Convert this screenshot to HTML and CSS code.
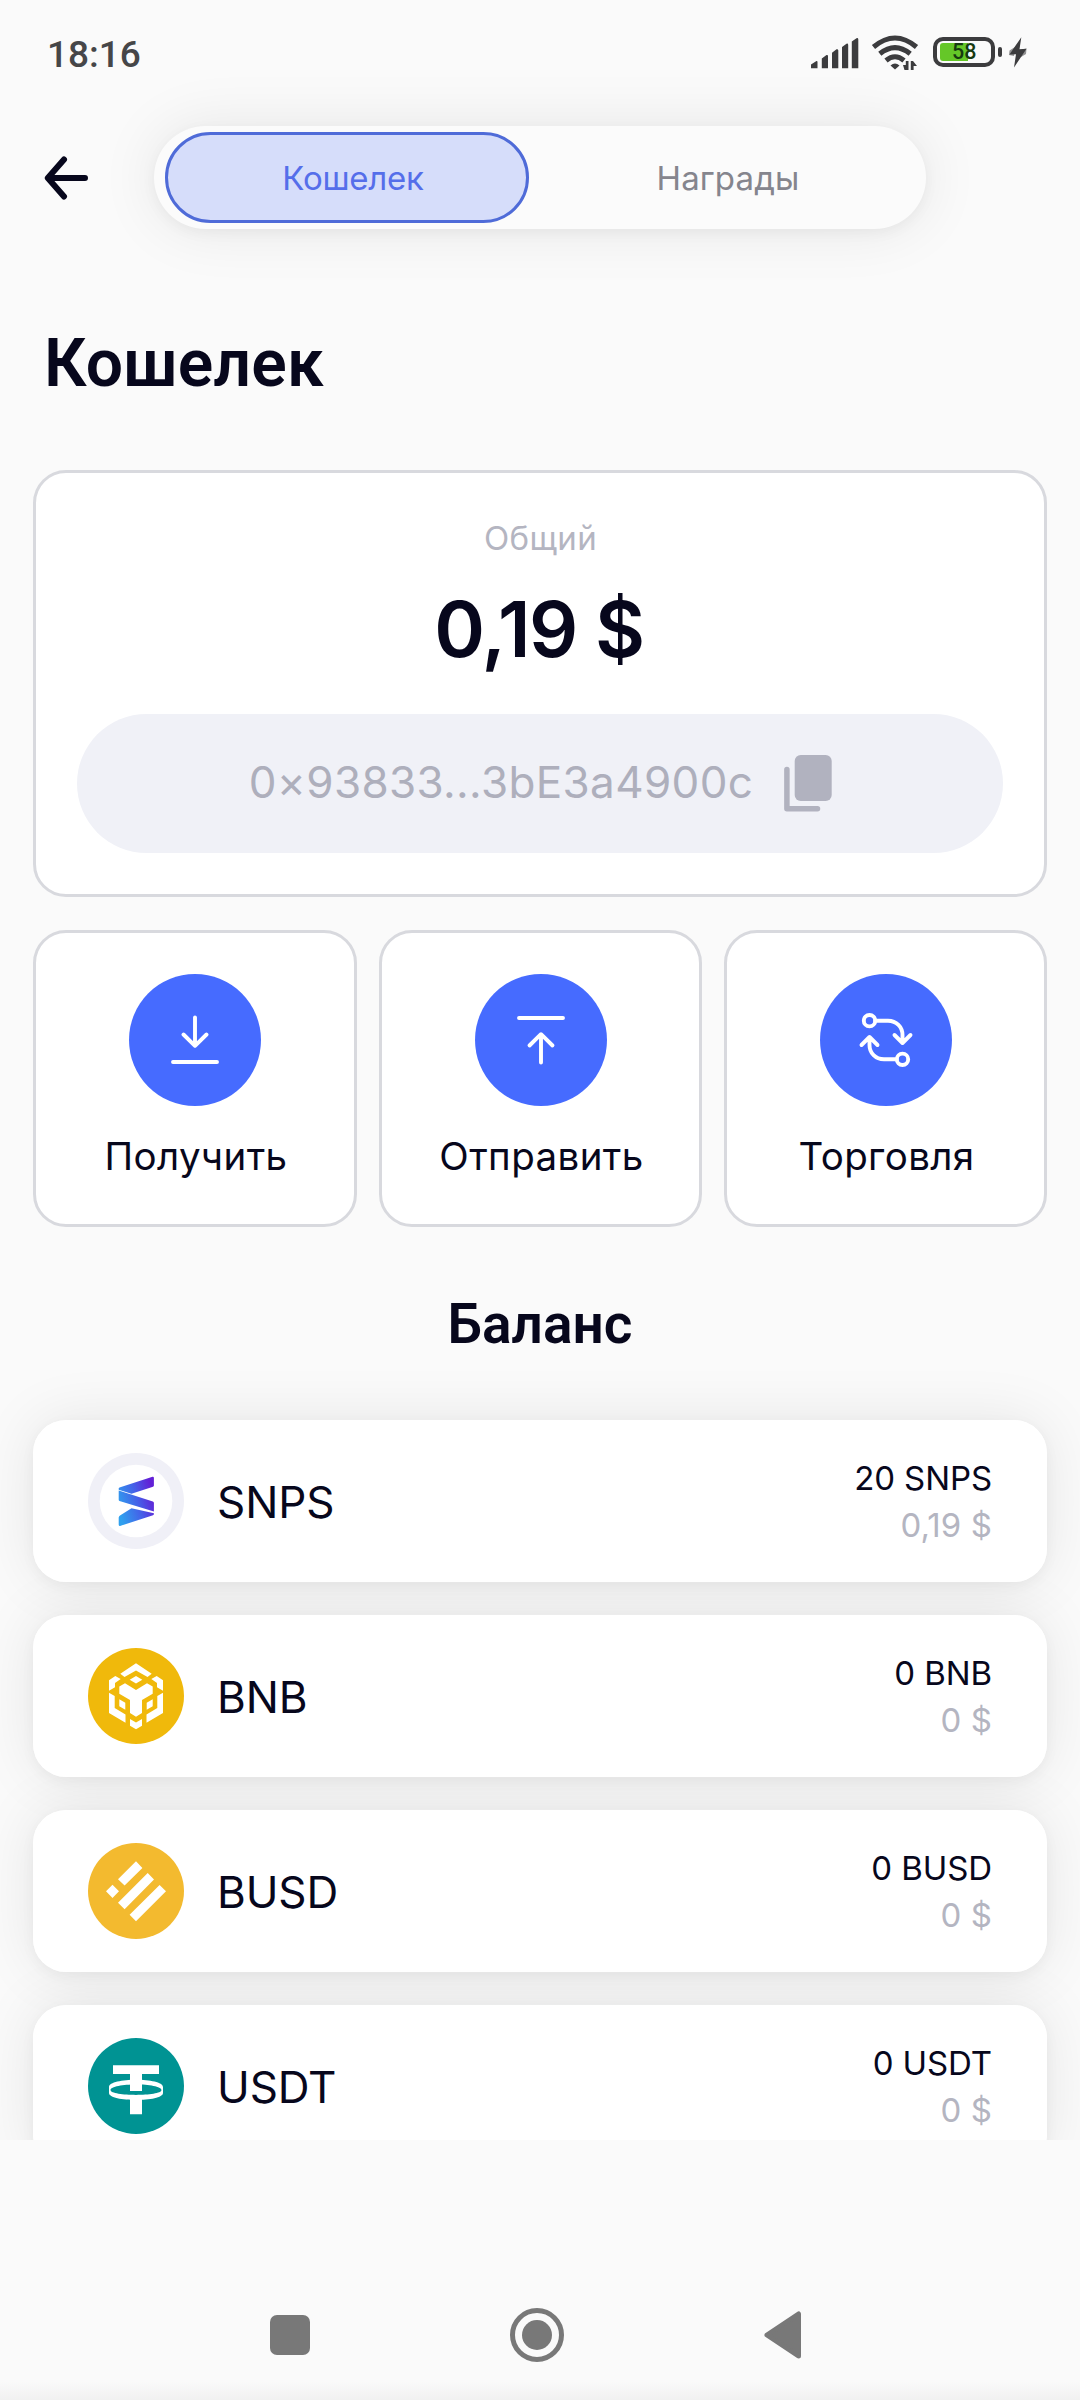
FILE: index.html
```html
<!DOCTYPE html>
<html lang="ru">
<head>
<meta charset="utf-8">
<title>Кошелек</title>
<link rel="stylesheet" href="styles.css">
</head>
<body>
<div class="screen">
  <div class="status">
    <span class="status-time">18:16</span>
    <div class="status-icons">
      <svg class="ico-signal" width="49" height="32" viewBox="0 0 49 32">
        <path d="M1 31.2V27.5L6.500 24Q7.500 23.800 7.500 25V31.200Z M11.800 31.200V21.500L16.500 18Q18 17.600 18 19V31.200Z M22 31.200V15.700L26.500 12.300Q28.300 12 28.300 13.500V31.200Z M32 31.200V10L36.500 6.700Q38.200 6.300 38.200 8V31.200Z M41.800 31.200V4.500L46.500 1.200Q48.300 .8 48.300 2.500V31.200Z"/>
      </svg>
      <svg class="ico-wifi" width="48" height="36" viewBox="0 0 48 36">
        <g fill="none" stroke-width="5"><path d="M2.500 12Q24 -6 45.500 12"/><path d="M8.800 18.800Q24 6.500 39.200 18.800"/><path d="M15 25.500Q24 18 33 25.500"/></g>
        <path class="solid" d="M24 34.500L19.500 30.500Q24 26.500 28.500 30.500Z"/>
        <path class="solid" d="M33.500 35L32 30H34.800V26H37.500V35Z M39.800 35V26H42L46 31H42.600V35Z"/>
      </svg>
      <div class="battery"><div class="battery-level"></div><span class="battery-text">58</span></div>
      <div class="battery-tip"></div>
      <svg class="ico-bolt" width="18" height="31" viewBox="0 0 18 31"><path d="M12.300 .3L.5 17.500L7 17.200L5 30.500L17.500 11.800L10.500 12.200Z"/><path d="M.5 13.500L6 10L5 19L0 18Z M17.500 11.500L17 17L12 20L10 13Z" opacity=".55"/></svg>
    </div>
  </div>

  <header class="header">
    <svg class="back" width="46" height="46" viewBox="0 0 46 46"><path d="M41 23H5M20 4.500L3.800 23L20 41.500"/></svg>
    <div class="tabs">
      <div class="tab tab-active">Кошелек</div>
      <div class="tab tab-rewards">Награды</div>
    </div>
  </header>

  <main class="content">
    <h1 class="title">Кошелек</h1>

    <section class="wallet">
      <div class="wallet-label">Общий</div>
      <div class="wallet-total">0,19 $</div>
      <div class="address">
        <span class="address-text">0×93833...3bE3a4900c</span>
        <svg width="48" height="57" viewBox="0 0 48 57"><rect x="10.700" y="0" width="37" height="46" rx="6"/><path d="M2.900 14.500V53.700H33.500"/></svg>
      </div>
    </section>

    <section class="actions">
      <div class="action">
        <svg class="action-icon" width="132" height="132" viewBox="0 0 132 132"><circle cx="66" cy="66" r="66"/><path d="M66 43.500V71M54.500 60.500L66 71.800L77.500 60.500M44 88H88"/></svg>
        <span>Получить</span>
      </div>
      <div class="action">
        <svg class="action-icon" width="132" height="132" viewBox="0 0 132 132"><circle cx="66" cy="66" r="66"/><path d="M66 88.500V61M54.500 71.500L66 60.200L77.500 71.500M44 44H88"/></svg>
        <span>Отправить</span>
      </div>
      <div class="action">
        <svg class="action-icon" width="132" height="132" viewBox="0 0 132 132"><circle cx="66" cy="66" r="66"/><path d="M55.300 46.700H68C76.500 46.700 82.500 53 82.500 61V67M74.500 61L82.500 69L90.500 61M76.700 85.300H64C55.500 85.300 49.500 79 49.500 71V65M41.500 71L49.500 63L57.500 71"/><circle class="node" cx="49.500" cy="46.700" r="5.700"/><circle class="node" cx="82.500" cy="85.300" r="5.700"/></svg>
        <span>Торговля</span>
      </div>
    </section>

    <h2 class="subtitle">Баланс</h2>

    <section class="tokens">
      <div class="token">
        <svg class="token-icon" width="96" height="96" viewBox="0 0 96 96">
          <defs><linearGradient id="snps" gradientUnits="userSpaceOnUse" x1="30" y1="54" x2="66" y2="44"><stop offset="0" stop-color="#2fa0ee"/><stop offset=".55" stop-color="#4560e8"/><stop offset="1" stop-color="#6220d6"/></linearGradient></defs>
          <circle cx="48" cy="48" r="48" fill="#f0f0f7"/><circle cx="48" cy="48" r="36.300" fill="#fff"/>
          <path fill="url(#snps)" d="M30.700 35.500Q30.700 34.800 31.500 34.500L64.500 23.800Q65.900 23.500 65.900 25V32.500Q65.900 33.400 65 33.700L43.500 40.800L30.700 36.700Z M30.700 37.500L64.800 48.600Q65.900 49 65.900 50V58.600L31.500 48Q30.700 47.700 30.700 46.800Z M43.500 55.300L65.900 60.200V61Q65.900 61.800 65 62.200L32 72.900Q30.700 73.200 30.700 71.800V64.500Q30.700 63.500 32 62.500Z"/>
        </svg>
        <span class="token-name">SNPS</span>
        <div class="token-sum"><div>20 SNPS</div><div class="fiat">0,19 $</div></div>
      </div>
      <div class="token">
        <svg class="token-icon" width="96" height="96" viewBox="0 0 96 96">
          <circle cx="48" cy="48" r="48" fill="#f0b90b"/>
          <path fill="#fff" d="M32.300 25.700L48 15.300L63.700 25.700L59.500 28.900L48 22.500L36.500 28.900Z M41.700 31.700L48 28L54.300 31.700L48 35.500Z M21 32.300L27.300 28L32.700 31L27 35V39.300L21 42.700Z M75 32.300L68.700 28L63.300 31L69 35V39.300L75 42.700Z M21 44.700L26.700 48V60L37.500 66.500V74.700L21 65Z M75 44.700L69.300 48V60L58.500 66.500V74.700L75 65Z M31.300 51.300L37.300 54.700V61.700L31.300 58.300Z M64.700 51.300L58.700 54.700V61.700L64.700 58.300Z M31.300 38.500L37 35.300L48 42L59 35.300L64.700 38.500V45.700L54 52V65L48 68.700L42 65V52L31.300 45.700Z M42 71L48 74.500L54 71V77.700L48 81.300L42 77.700Z"/>
        </svg>
        <span class="token-name">BNB</span>
        <div class="token-sum"><div>0 BNB</div><div class="fiat">0 $</div></div>
      </div>
      <div class="token">
        <svg class="token-icon" width="96" height="96" viewBox="0 0 96 96">
          <circle cx="48" cy="48" r="48" fill="#f3ba2f"/>
          <path fill="#fff" d="M48 18.300L54.400 24.900L36.600 42.600L30 36.200Z M24.500 41.700L31 48.300L24.500 55L18 48.300Z M59.700 30L66 36.600L36.600 66.200L30 59.700Z M71.600 42L78 48.300L48 78.300L41.600 71.700Z"/>
        </svg>
        <span class="token-name">BUSD</span>
        <div class="token-sum"><div>0 BUSD</div><div class="fiat">0 $</div></div>
      </div>
      <div class="token">
        <svg class="token-icon" width="96" height="96" viewBox="0 0 96 96">
          <circle cx="48" cy="48" r="48" fill="#009393"/>
          <path fill="#fff" fill-rule="evenodd" d="M21 49C21 39.300 75 39.300 75 49V55C75 64.300 21 64.300 21 55Z M22.500 52C22.500 58.500 73.500 58.500 73.500 52C73.500 44.500 22.500 44.500 22.500 52Z"/>
          <path fill="#fff" d="M25 27.300H71V36H54V53H42V36H25Z M42 60H54V76.300H42Z"/>
        </svg>
        <span class="token-name">USDT</span>
        <div class="token-sum"><div>0 USDT</div><div class="fiat">0 $</div></div>
      </div>
    </section>
  </main>

  <nav class="navbar">
    <div class="nav-recent"></div>
    <div class="nav-home"><div class="nav-home-dot"></div></div>
    <svg class="nav-back" width="38" height="48" viewBox="0 0 38 48"><path d="M3 24L34.500 3V45Z"/></svg>
  </nav>
</div>
</body>
</html>
```
FILE: styles.css
```css
* { box-sizing: border-box; }

body {
  margin: 0;
  background: #fafafa;
  color: #07071c;
  font-family: Inter, "Liberation Sans", sans-serif;
}

.screen {
  width: 1080px;
  height: 2400px;
  display: flex;
  flex-direction: column;
  overflow: hidden;
}

/* system status bar */
.status {
  height: 104px;
  flex: none;
  display: flex;
  align-items: center;
  justify-content: space-between;
  padding: 0 53px 0 47px;
}
.status-time {
  padding-top: 5px;
  font: 500 37px/44px Roboto, sans-serif;
  color: #464648;
}
.status-icons { display: flex; align-items: center; }
.ico-signal { margin: 1px 12px 0 0; fill: #3c3c3e; }
.ico-wifi { margin: 2px 14px 0 0; stroke: #3c3c3e; }
.ico-wifi .solid { fill: #3c3c3e; stroke: none; }
.ico-bolt { margin-left: 7px; fill: #3c3c3e; }
.battery {
  width: 62px;
  height: 30px;
  display: grid;
  align-items: center;
  border: 4px solid #3c3c3e;
  border-radius: 10px;
  padding-left: 3px;
}
.battery-level, .battery-text { grid-area: 1 / 1; }
.battery-level {
  width: 28px;
  height: 18px;
  border-radius: 3px 0 0 3px;
  background: #65c728;
}
.battery-text {
  padding-left: 12px;
  font: 500 21.500px/22px Roboto, sans-serif;
  color: #173a10;
}
.battery-tip {
  width: 4px;
  height: 10px;
  margin-left: 3px;
  border-radius: 2px;
  background: #3c3c3e;
}

/* back arrow and section switch */
.header {
  flex: none;
  display: flex;
  align-items: center;
  padding: 22px 0 0 44px;
}
.back {
  fill: none;
  stroke: #07071c;
  stroke-width: 6;
  stroke-linecap: round;
  stroke-linejoin: round;
}
.tabs {
  width: 772px;
  height: 103px;
  margin-left: 64px;
  padding-left: 11px;
  display: flex;
  align-items: center;
  border-radius: 52px;
  background: #fbfbfb;
  box-shadow: 0 4px 14px rgba(0, 0, 0, .045), 0 0 60px rgba(0, 0, 0, .085);
}
.tab {
  flex: 1;
  text-align: center;
  font-size: 33px;
  line-height: 40px;
  color: #85858d;
}
.tab-rewards { padding-left: 1px; letter-spacing: .15px; }
.tab-active {
  flex: none;
  width: 364px;
  height: 91px;
  padding-left: 12px;
  line-height: 86px;
  letter-spacing: -.25px;
  color: #556eea;
  background: #d6ddfa;
  border: 3px solid #4f6bd8;
  border-radius: 46px;
}

.content {
  height: 1911px;
  flex: none;
  overflow: hidden;
  padding: 95px 33px 0;
}
.title {
  margin: 0 0 66px;
  padding-left: 11px;
  font: 600 66px/80px Roboto, sans-serif;
  letter-spacing: .15px;
}

.wallet {
  height: 427px;
  padding: 45px 41px 0;
  background: #fff;
  border: 3px solid #d8d9de;
  border-radius: 33px;
  text-align: center;
}
.wallet-label {
  padding-left: 1px;
  font-size: 33px;
  line-height: 41px;
  letter-spacing: .3px;
  color: #b4b5c1;
}
.wallet-total {
  margin: 23px 0 38px;
  padding-right: 2px;
  font-size: 77px;
  line-height: 94px;
  font-weight: 600;
  letter-spacing: -1.400px;
}
.address {
  height: 139px;
  display: flex;
  align-items: center;
  justify-content: center;
  gap: 31px;
  border-radius: 70px;
  background: #f0f1f7;
}
.address-text {
  padding: 0 0 3px 1px;
  font-size: 44px;
  letter-spacing: .35px;
  color: #aeafbc;
}
.address svg { fill: #b1b2bf; }
.address path {
  fill: none;
  stroke: #b1b2bf;
  stroke-width: 5.500;
  stroke-linecap: round;
  stroke-linejoin: round;
}

.actions {
  margin-top: 33px;
  display: grid;
  grid-template-columns: 324px 323px 323px;
  gap: 22px;
}
.action {
  height: 297px;
  padding-top: 41px;
  display: flex;
  flex-direction: column;
  align-items: center;
  gap: 25px;
  background: #fff;
  border: 3px solid #d8d9de;
  border-radius: 33px;
  font-size: 38.500px;
  line-height: 50px;
  letter-spacing: .4px;
}
.action span { padding-left: 2px; }
.action-icon { fill: #466bff; }
.action-icon path, .action-icon .node {
  fill: none;
  stroke: #fff;
  stroke-width: 3.900;
  stroke-linecap: round;
  stroke-linejoin: round;
}

.subtitle {
  margin: 65px 0 64px;
  text-align: center;
  font: 600 55px/64px Roboto, sans-serif;
}

.tokens {
  display: flex;
  flex-direction: column;
  gap: 33px;
  isolation: isolate;
}
.token {
  position: relative;
  height: 162px;
  flex: none;
  display: flex;
  align-items: center;
  padding: 0 55px;
  border-radius: 33px;
  background: #fff;
}
/* shadows sit below every card so neighbours stay white */
.token::before {
  content: "";
  position: absolute;
  inset: 0;
  z-index: -1;
  border-radius: 33px;
  box-shadow: 0 4px 14px rgba(0, 0, 0, .045), 0 0 60px rgba(0, 0, 0, .085);
}
.token-name {
  flex: 1;
  padding: 1px 0 0 33px;
  font-size: 44px;
  letter-spacing: -.1px;
}
.token-sum {
  padding-top: 1px;
  text-align: right;
  font-size: 33px;
  line-height: 47px;
  letter-spacing: -.1px;
}
.fiat { color: #b4b5c1; letter-spacing: .1px; }

/* system navigation */
.navbar {
  flex: 1;
  display: flex;
  align-items: center;
  padding: 130px 278px 0 270px;
  justify-content: space-between;
  background: linear-gradient(to bottom, #fafafa calc(100% - 18px), #f1f1f1);
}
.nav-recent {
  width: 40px;
  height: 40px;
  border-radius: 7px;
  background: #787878;
}
.nav-home {
  width: 54px;
  height: 54px;
  display: grid;
  place-items: center;
  border: 5px solid #787878;
  border-radius: 50%;
}
.nav-home-dot {
  width: 30px;
  height: 30px;
  border-radius: 50%;
  background: #787878;
}
.nav-back {
  fill: #787878;
  stroke: #787878;
  stroke-width: 5;
  stroke-linejoin: round;
}
```
